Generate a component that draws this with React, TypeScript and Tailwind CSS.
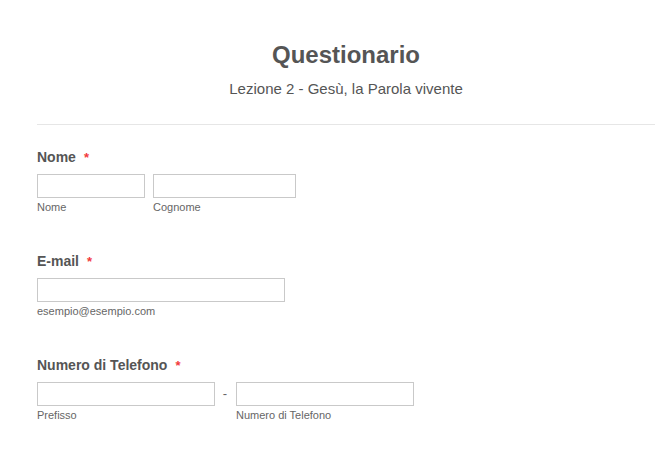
function Required() {
  return <span className="ml-[8px] text-[13px] text-[#f23a3c]">*</span>;
}

function Field({ label, children }: { label: string; children: React.ReactNode }) {
  return (
    <div className="flex flex-col">
      <div className="text-[14px] leading-[18px] font-bold text-[#555]">
        {label}
        <Required />
      </div>
      <div className="mt-[7px]">{children}</div>
    </div>
  );
}

function Input({ width, sub }: { width: string; sub: string }) {
  return (
    <div className="flex flex-col">
      <input
        type="text"
        className={`${width} h-[24px] border border-[#c9c9c9] bg-white outline-none`}
      />
      <span className="mt-[2px] text-[11px] leading-[14px] text-[#666]">{sub}</span>
    </div>
  );
}

export default function App() {
  return (
    <div
      className="min-h-screen bg-white"
      style={{ fontFamily: '"Liberation Sans", Arial, sans-serif' }}
    >
      <div className="ml-[37px] w-[618px] pt-[40px]">
        <div className="flex flex-col items-center">
          <h1 className="text-[24px] leading-[30px] font-bold text-[#555]">Questionario</h1>
          <p className="mt-[9px] text-[15px] leading-[20px] text-[#555]">
            Lezione 2 - Gesù, la Parola vivente
          </p>
        </div>
        <div className="mt-[25px] h-px bg-[#e6e6e6]" />

        <div className="mt-[23px] flex flex-col gap-[38px]">
          <Field label="Nome">
            <div className="flex gap-[8px]">
              <Input width="w-[108px]" sub="Nome" />
              <Input width="w-[143px]" sub="Cognome" />
            </div>
          </Field>

          <Field label="E-mail">
            <Input width="w-[248px]" sub="esempio@esempio.com" />
          </Field>

          <Field label="Numero di Telefono">
            <div className="flex">
              <Input width="w-[178px]" sub="Prefisso" />
              <span className="w-[20px] mr-[1px] h-[24px] flex items-center justify-center text-[13px] text-[#666]">
                -
              </span>
              <Input width="w-[178px]" sub="Numero di Telefono" />
            </div>
          </Field>
        </div>
      </div>
    </div>
  );
}
